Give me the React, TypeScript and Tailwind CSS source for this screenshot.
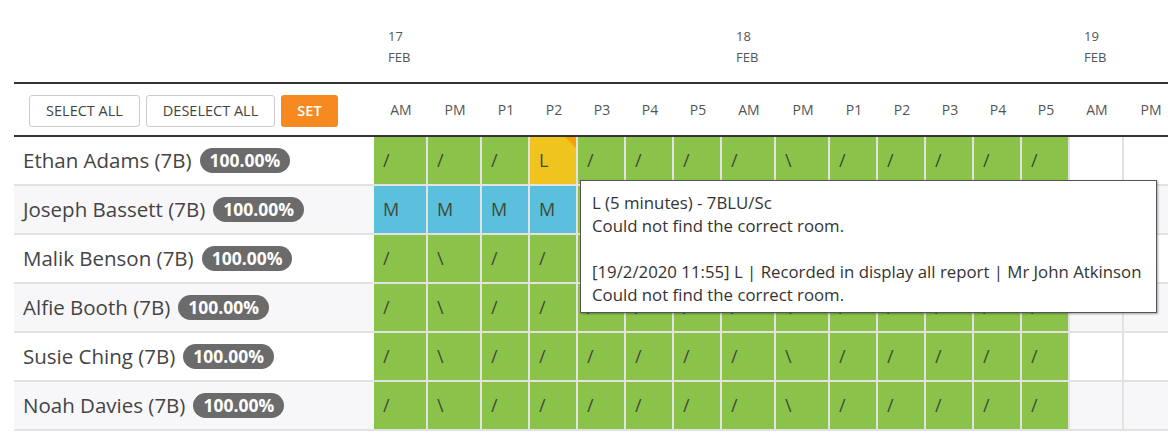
import React from 'react';

type Mark = { v: string; kind?: 'ok' | 'late' | 'med' | 'empty' };

const SLOTS = ['AM', 'PM', 'P1', 'P2', 'P3', 'P4', 'P5'];
const DAYS = [
  { d: '17', m: 'FEB' },
  { d: '18', m: 'FEB' },
  { d: '19', m: 'FEB' },
];

const weekMarks = (first: string[]): Mark[] => {
  const cells: Mark[] = first.map((v) => ({ v, kind: v === 'L' ? 'late' : v === 'M' ? 'med' : 'ok' }));
  return [...cells, { v: '', kind: 'empty' }, { v: '', kind: 'empty' }];
};

const STUDENTS = [
  { name: 'Ethan Adams (7B)', marks: weekMarks(['/', '/', '/', 'L', '/', '/', '/', '/', '\\', '/', '/', '/', '/', '/']) },
  { name: 'Joseph Bassett (7B)', marks: weekMarks(['M', 'M', 'M', 'M', '/', '/', '/', '/', '\\', '/', '/', '/', '/', '/']) },
  { name: 'Malik Benson (7B)', marks: weekMarks(['/', '\\', '/', '/', '/', '/', '/', '/', '\\', '/', '/', '/', '/', '/']) },
  { name: 'Alfie Booth (7B)', marks: weekMarks(['/', '\\', '/', '/', '/', '/', '/', '/', '\\', '/', '/', '/', '/', '/']) },
  { name: 'Susie Ching (7B)', marks: weekMarks(['/', '\\', '/', '/', '/', '/', '/', '/', '\\', '/', '/', '/', '/', '/']) },
  { name: 'Noah Davies (7B)', marks: weekMarks(['/', '\\', '/', '/', '/', '/', '/', '/', '\\', '/', '/', '/', '/', '/']) },
];

const colWidth = (i: number) => (i % 7 < 2 ? 'w-[54px]' : 'w-[48px]');

const bgFor = (kind: Mark['kind']) => {
  if (kind === 'late') return 'bg-[#f0c41e]';
  if (kind === 'med') return 'bg-[#5bc0de]';
  if (kind === 'empty') return '';
  return 'bg-[#8bc34a]';
};

const App: React.FC = () => {
  const allSlots = [...SLOTS, ...SLOTS, 'AM', 'PM'];

  return (
    <div className="relative w-[1168px] h-[433px] overflow-hidden bg-white font-['Open_Sans',sans-serif] text-[#444]">
      <div className="pl-[14px] w-[1200px]">
        {/* dates */}
        <div className="flex h-[84px] items-end border-b-2 border-[#333]">
          <div className="w-[360px] shrink-0" />
          {DAYS.map((day) => (
            <div key={day.d} className="w-[348px] shrink-0 pl-[14px] pb-[14px] text-[13px] leading-[21px] text-[#555]">
              <div>{day.d}</div>
              <div>{day.m}</div>
            </div>
          ))}
        </div>

        {/* toolbar + slot labels */}
        <div className="flex h-[53px] items-center border-b-2 border-[#333]">
          <div className="w-[360px] shrink-0 flex items-center gap-[6px] pl-[15px] pt-[2px]">
            <button className="h-[32px] w-[111px] rounded-[3px] border border-[#ccc] bg-white text-[14.5px] text-[#444]">
              SELECT ALL
            </button>
            <button className="h-[32px] w-[129px] rounded-[3px] border border-[#ccc] bg-white text-[14.5px] text-[#444]">
              DESELECT ALL
            </button>
            <button className="h-[32px] w-[57px] rounded-[3px] bg-[#f6891f] text-[14.5px] font-semibold text-white">
              SET
            </button>
          </div>
          {allSlots.map((s, i) => (
            <div key={i} className={`${colWidth(i)} shrink-0 text-center text-[14px] text-[#555]`}>
              {s}
            </div>
          ))}
        </div>

        {/* rows */}
        {STUDENTS.map((st, r) => (
          <div
            key={st.name}
            className={`flex h-[49px] border-b-2 border-[#e2e2e2] ${r % 2 === 1 ? 'bg-[#f7f7f9]' : 'bg-white'}`}
          >
            <div className="w-[360px] shrink-0 flex items-center pl-[9px]">
              <span className="text-[20.5px] text-[#444]">{st.name}</span>
              <span className="ml-[8px] h-[25px] rounded-full bg-[#6b6b6b] px-[10px] text-[17.5px] font-bold leading-[25px] text-white">
                100.00%
              </span>
            </div>
            {st.marks.map((m, i) => (
              <div
                key={i}
                className={`${colWidth(i)} relative shrink-0 flex items-center border-r-2 border-[#e2e2e2] pl-[9px] text-[18px] text-[#3f4a3a] ${bgFor(m.kind)}`}
              >
                {m.v}
                {m.kind === 'late' && (
                  <span className="absolute right-0 top-0 h-[11px] w-[11px] bg-[#f5a200] [clip-path:polygon(0_0,100%_0,100%_100%)]" />
                )}
              </div>
            ))}
          </div>
        ))}
      </div>

      {/* tooltip */}
      <div className="absolute left-[580px] top-[180px] w-[577px] h-[133px] border border-[#555] bg-white pl-[11px] pt-[10px] text-[16.8px] leading-[23px] text-[#333] shadow-[1px_1px_2px_rgba(0,0,0,0.35)] whitespace-nowrap">
        <div>L (5 minutes) - 7BLU/Sc</div>
        <div>Could not find the correct room.</div>
        <div>&nbsp;</div>
        <div>[19/2/2020 11:55] L | Recorded in display all report | Mr John Atkinson</div>
        <div>Could not find the correct room.</div>
      </div>
    </div>
  );
};

export default App;
